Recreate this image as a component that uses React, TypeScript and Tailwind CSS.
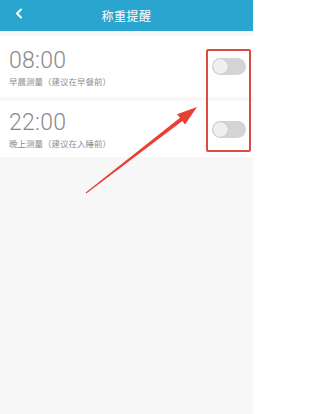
import React from "react";

const reminders = [
  { time: "08:00", note: "早晨测量（建议在早餐前）", h: "h-[61px]", pt: "pt-[3px]" },
  { time: "22:00", note: "晚上测量（建议在入睡前）", h: "h-[56px]", pt: "pt-[2px]" },
];

function Toggle() {
  return (
    <div className="w-[34px] h-[17px] rounded-full bg-[#d4d4d4] flex items-center px-[1px]">
      <div className="w-[15px] h-[15px] rounded-full bg-[#efefef] shadow-[0_0_1px_rgba(0,0,0,0.25)]" />
    </div>
  );
}

export default function App() {
  return (
    <div className="relative w-[253px] h-[414px] bg-[#f7f7f7] overflow-hidden font-['Roboto','Noto_Sans_CJK_SC',sans-serif]">
      <div className="h-[31px] bg-[#2aa5cf] flex items-center justify-center relative">
        <svg
          className="absolute left-[14px] top-[8px]"
          width="10"
          height="11"
          viewBox="0 0 10 11"
          fill="none"
        >
          <path d="M7 1.5 L3 5.5 L7 9.5" stroke="#fff" strokeWidth="2" strokeLinecap="round" strokeLinejoin="round" />
        </svg>
        <span className="text-white text-[12px] tracking-[0.5px] font-['Noto_Sans_CJK_SC',sans-serif]">
          称重提醒
        </span>
      </div>

      <div className="pt-[5px] flex flex-col gap-[4px]">
        {reminders.map((r) => (
          <div key={r.time} className={`${r.h} bg-white flex items-center justify-between pl-[9px] pr-[7px]`}>
            <div className={`flex flex-col ${r.pt}`}>
              <span className="text-[23px] leading-[24px] font-light text-[#8a8a8a] tracking-[0.3px]">
                {r.time}
              </span>
              <span className="mt-[3px] text-[8.5px] leading-[11px] text-[#8c8c8c] font-['Noto_Sans_CJK_SC',sans-serif]">
                {r.note}
              </span>
            </div>
            <Toggle />
          </div>
        ))}
      </div>

      {/* annotation overlay */}
      <div className="absolute left-[206px] top-[49px] w-[45px] h-[103px] border-2 border-[#dd4a40] rounded-[2px]" />
      <svg className="absolute left-0 top-0" width="253" height="414" viewBox="0 0 253 414">
        <polygon
          points="86.3,193.4 182.4,120.9 185,124.5 197,107 177,114.2 180,117.7 85.7,192.6"
          fill="#ea3f33"
        />
      </svg>
    </div>
  );
}
